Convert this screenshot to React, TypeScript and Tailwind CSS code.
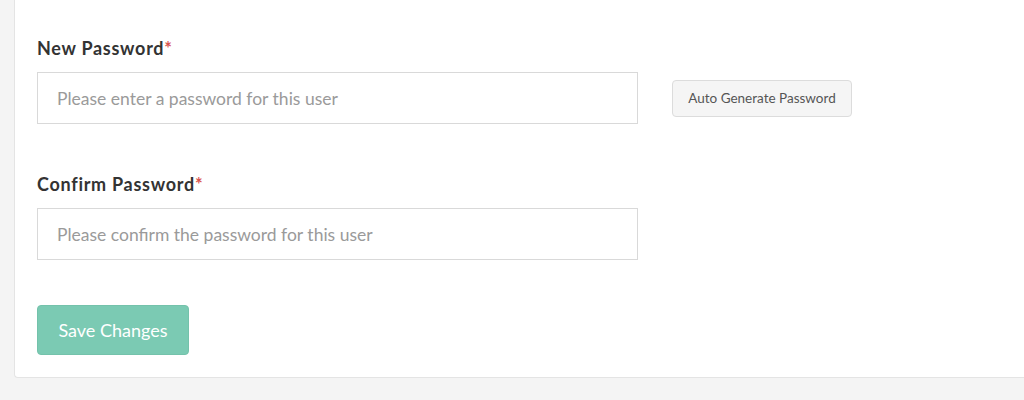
export default function App() {
  return (
    <div
      className="h-[400px] w-[1024px] bg-[#f4f4f4] pl-[14px]"
      style={{ fontFamily: "Lato, 'Open Sans', sans-serif" }}
    >
      <div className="flex h-[378px] flex-col rounded-bl-[4px] border-b border-l border-[#e4e4e4] bg-white px-[22px] pt-[36px]">
        <label className="text-[18px] font-bold leading-6 tracking-[0.04em] text-[#333]">
          New Password<span className="text-[#d9534f]">*</span>
        </label>
        <div className="mt-3 flex items-center gap-[34px]">
          <input
            type="password"
            placeholder="Please enter a password for this user"
            className="h-[52px] w-[601px] border border-[#d9d9d9] px-[19px] text-[17.5px] text-[#555] outline-none placeholder:text-[#9a9a9a]"
          />
          <button className="h-[37px] w-[180px] rounded-[4px] border border-[#dcdcdc] bg-[#f5f5f5] text-[13.5px] text-[#555]">
            Auto Generate Password
          </button>
        </div>

        <label className="mt-[48px] text-[18px] font-bold leading-6 tracking-[0.04em] text-[#333]">
          Confirm Password<span className="text-[#d9534f]">*</span>
        </label>
        <input
          type="password"
          placeholder="Please confirm the password for this user"
          className="mt-3 h-[52px] w-[601px] border border-[#d9d9d9] px-[19px] text-[17.5px] text-[#555] outline-none placeholder:text-[#9a9a9a]"
        />

        <button className="mt-[45px] h-[50px] w-[152px] rounded-[4px] border border-[#74c2ab] bg-[#7bcab3] text-[18px] text-white">
          Save Changes
        </button>
      </div>
    </div>
  );
}
